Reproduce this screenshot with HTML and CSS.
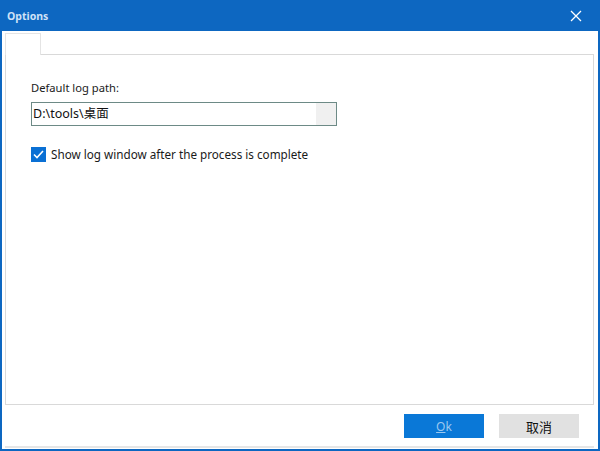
FILE: index.html
```html
<!DOCTYPE html>
<html>
<head>
<meta charset="utf-8">
<link rel="stylesheet" href="styles.css">
</head>
<body>
<div class="window">
  <div class="titlebar">
    <span class="title">Options</span>
    <span class="close">
      <svg width="12" height="12" viewBox="0 0 12 12"><path d="M1 1L11 11M11 1L1 11" stroke="#fff" stroke-width="1.3"/></svg>
    </span>
  </div>
  <div class="client">
    <div class="tabs">
      <div class="tab"></div>
    </div>
    <div class="panel">
      <div class="label">Default log path:</div>
      <div class="textbox">
        <span class="value">D:\tools\桌面</span>
        <span class="browse"></span>
      </div>
      <label class="check">
        <span class="box">
          <svg width="15" height="15" viewBox="0 0 15 15"><path d="M3 7.5L6 10.5L12 4" fill="none" stroke="#fff" stroke-width="1.6"/></svg>
        </span>
        <span>Show log window after the process is complete</span>
      </label>
    </div>
    <div class="buttons">
      <button class="btn primary"><u>O</u>k</button>
      <button class="btn">取消</button>
    </div>
  </div>
</div>
</body>
</html>
```
FILE: styles.css
```css
html, body {
  margin: 0;
  padding: 0;
  width: 600px;
  height: 451px;
  overflow: hidden;
  background: #ffffff;
}
.window {
  width: 600px;
  height: 451px;
  box-sizing: border-box;
  background: #0d67c1;
  padding: 0 2px 2px 2px;
  display: flex;
  flex-direction: column;
  font-family: "Noto Sans", "Noto Sans CJK SC", sans-serif;
}
.titlebar {
  height: 31px;
  display: flex;
  align-items: center;
  justify-content: space-between;
  padding: 0 16px 0 5px;
  color: #e6f0fb;
}
.title {
  font-size: 10.5px;
  font-weight: bold;
  color: #cfe2f7;
}
.close {
  display: flex;
}
.client {
  flex: 1;
  background: #ffffff;
  display: flex;
  flex-direction: column;
  padding: 0 4px 0 3px;
}
.tabs {
  height: 23px;
  display: flex;
  align-items: flex-end;
}
.tab {
  width: 36px;
  height: 22px;
  box-sizing: border-box;
  border: 1px solid #e4e4e4;
  border-bottom: none;
  background: #ffffff;
  margin-bottom: -1px;
  position: relative;
  z-index: 1;
}
.panel {
  height: 351px;
  box-sizing: border-box;
  border: 1px solid #d9d9d9;
  padding: 25px 0 0 25px;
  display: flex;
  flex-direction: column;
  align-items: flex-start;
}
.label {
  font-size: 11.2px;
  color: #1a1a1a;
  line-height: 16px;
  height: 16px;
}
.textbox {
  margin-top: 6px;
  width: 306px;
  height: 24px;
  box-sizing: border-box;
  border: 1px solid #6d8a86;
  display: flex;
  align-items: center;
  padding-left: 1px;
}
.value {
  flex: 1;
  font-size: 12.5px;
  color: #111;
  line-height: 18px;
}
.browse {
  width: 20px;
  height: 22px;
  background: #f0f0f0;
}
.check {
  margin-top: 20px;
  display: flex;
  align-items: center;
  gap: 5px;
  font-size: 11.7px;
  color: #1a1a1a;
}
.box {
  width: 15px;
  height: 15px;
  background: #0a70d4;
  display: flex;
}
.buttons {
  flex: 1;
  display: flex;
  justify-content: flex-end;
  align-items: flex-start;
  padding: 9px 15px 0 0;
  gap: 15px;
  border-bottom: 2px solid #e6e6e6;
  margin-bottom: 1px;
}
.btn {
  width: 80px;
  height: 24px;
  border: none;
  background: #e1e1e1;
  font-family: "Noto Sans CJK SC", "Noto Sans", sans-serif;
  font-size: 13px;
  color: #111;
  padding: 0;
}
.btn.primary {
  background: #0a78d7;
  color: #9cc8ef;
  font-family: "Noto Sans", sans-serif;
  font-size: 12px;
}
```
